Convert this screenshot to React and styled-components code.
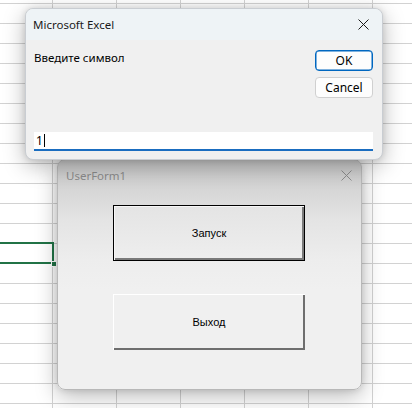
import React from "react";
import styled, { createGlobalStyle } from "styled-components";

const Global = createGlobalStyle`
  html, body { margin: 0; padding: 0; }
  body { width: 412px; height: 408px; overflow: hidden; background: #fff; font-family: "Noto Sans", "Segoe UI", sans-serif; }
`;

const Desktop = styled.div`
  position: relative;
  width: 412px;
  height: 408px;
  overflow: hidden;
  background-color: #ffffff;
  background-image:
    linear-gradient(to right, #d2d2d2 1px, transparent 1px),
    linear-gradient(to bottom, #d2d2d2 1px, transparent 1px);
  background-size: 64px 20px, 64px 20px;
  background-position: 52px 0, 0 3px;
`;

const SelectedCell = styled.div`
  position: absolute;
  left: -20px;
  top: 242px;
  width: 70px;
  height: 18px;
  border: 2px solid #217346;
`;

const FillHandle = styled.div`
  position: absolute;
  right: -5px;
  bottom: -5px;
  width: 6px;
  height: 6px;
  background: #217346;
  border: 1px solid #fff;
  box-sizing: border-box;
`;

const Window = styled.div`
  position: absolute;
  left: ${(p) => p.$x}px;
  top: ${(p) => p.$y}px;
  width: ${(p) => p.$w}px;
  height: ${(p) => p.$h}px;
  box-sizing: border-box;
  border-radius: 8px;
  border: 1px solid ${(p) => (p.$active ? "#c9cdd2" : "#b8b8b8")};
  box-shadow: 0 6px 22px rgba(0, 0, 0, 0.28), 0 0 6px rgba(0, 0, 0, 0.12);
  display: flex;
  flex-direction: column;
  overflow: hidden;
  z-index: ${(p) => (p.$active ? 2 : 1)};
`;

const ExcelWindow = styled(Window)`
  background: #f0f0f0;
`;

const FormWindow = styled(Window)`
  background: linear-gradient(#c7c7c7 0px, #d6d6d6 30px, #e4e4e4 60px, #ededed 100px, #f0f0f0 130px);
`;

const TitleBar = styled.div`
  height: ${(p) => p.$h}px;
  flex: none;
  display: flex;
  align-items: center;
  justify-content: space-between;
  padding: 0 ${(p) => p.$pr}px 0 ${(p) => p.$pl}px;
  background: ${(p) => p.$bg || "transparent"};
`;

const TitleText = styled.span`
  font-size: 11.5px;
  color: ${(p) => (p.$dim ? "#8a8a8a" : "#1a1a1a")};
`;

const CloseIcon = ({ color }) => (
  <svg width="11" height="11" viewBox="0 0 11 11">
    <path d="M0.5 0.5 L10.5 10.5 M10.5 0.5 L0.5 10.5" stroke={color} strokeWidth="1" fill="none" />
  </svg>
);

const CloseBox = styled.div`
  width: 11px;
  height: 11px;
  display: flex;
`;

const ExcelBody = styled.div`
  flex: 1;
  display: grid;
  grid-template-columns: 1fr 58px;
  grid-template-rows: auto 1fr auto;
  padding: 10px 9px 8px 8px;
  column-gap: 8px;
`;

const Prompt = styled.div`
  font-size: 11.5px;
  color: #000;
  line-height: 16px;
`;

const ButtonStack = styled.div`
  display: flex;
  flex-direction: column;
  gap: 6px;
  grid-row: 1 / 3;
  grid-column: 2;
`;

const DlgButton = styled.button`
  width: 58px;
  height: 21px;
  box-sizing: border-box;
  border-radius: 4px;
  font-family: "Noto Sans", sans-serif;
  font-size: 12px;
  color: #000;
  padding: 0;
  background: #fdfdfd;
  border: 1px solid ${(p) => (p.$primary ? "#0067c0" : "#d0d0d0")};
  box-shadow: ${(p) => (p.$primary ? "inset 0 0 0 0.5px #0067c0" : "none")};
`;

const InputBox = styled.div`
  grid-column: 1 / 3;
  height: 19px;
  box-sizing: border-box;
  background: #fff;
  border-bottom: 2px solid #1a6dc0;
  display: flex;
  align-items: center;
  padding-left: 2px;
  font-size: 12px;
  color: #000;
`;

const Caret = styled.span`
  display: inline-block;
  width: 1px;
  height: 13px;
  background: #000;
  margin-left: 1px;
`;

const FormBody = styled.div`
  flex: 1;
  display: flex;
  flex-direction: column;
  padding: 15px 0 0 55px;
  gap: 33px;
`;

const ClassicButton = styled.div`
  width: 192px;
  height: ${(p) => p.$h}px;
  box-sizing: border-box;
  display: flex;
  align-items: center;
  justify-content: center;
  font-family: "Liberation Sans", Arial, sans-serif;
  font-size: 11px;
  color: #000;
  background: ${(p) => (p.$default ? "linear-gradient(#e4e4e4, #eeeeee)" : "#f0f0f0")};
  border: ${(p) => (p.$default ? "1px solid #000" : "none")};
  box-shadow: ${(p) =>
    p.$default
      ? "inset 1px 1px 0 #f6f6f6, inset -2px -2px 0 #7a7a7a"
      : "inset 1px 1px 0 #ffffff, inset -2px -2px 0 #6e6e6e"};
`;

export default function App() {
  return (
    <Desktop>
      <Global />
      <SelectedCell>
        <FillHandle />
      </SelectedCell>

      <ExcelWindow $x={25} $y={8} $w={358} $h={152} $active>
        <TitleBar $h={31} $pl={7} $pr={13} $bg="#eef3f6">
          <TitleText>Microsoft Excel</TitleText>
          <CloseBox>
            <CloseIcon color="#1a1a1a" />
          </CloseBox>
        </TitleBar>
        <ExcelBody>
          <Prompt>Введите символ</Prompt>
          <ButtonStack>
            <DlgButton $primary>OK</DlgButton>
            <DlgButton>Cancel</DlgButton>
          </ButtonStack>
          <div />
          <InputBox>
            1<Caret />
          </InputBox>
        </ExcelBody>
      </ExcelWindow>

      <FormWindow $x={57} $y={159} $w={305} $h={231}>
        <TitleBar $h={30} $pl={8} $pr={9}>
          <TitleText $dim>UserForm1</TitleText>
          <CloseBox>
            <CloseIcon color="#8c8c8c" />
          </CloseBox>
        </TitleBar>
        <FormBody>
          <ClassicButton $default $h={56}>Запуск</ClassicButton>
          <ClassicButton $h={56}>Выход</ClassicButton>
        </FormBody>
      </FormWindow>
    </Desktop>
  );
}
